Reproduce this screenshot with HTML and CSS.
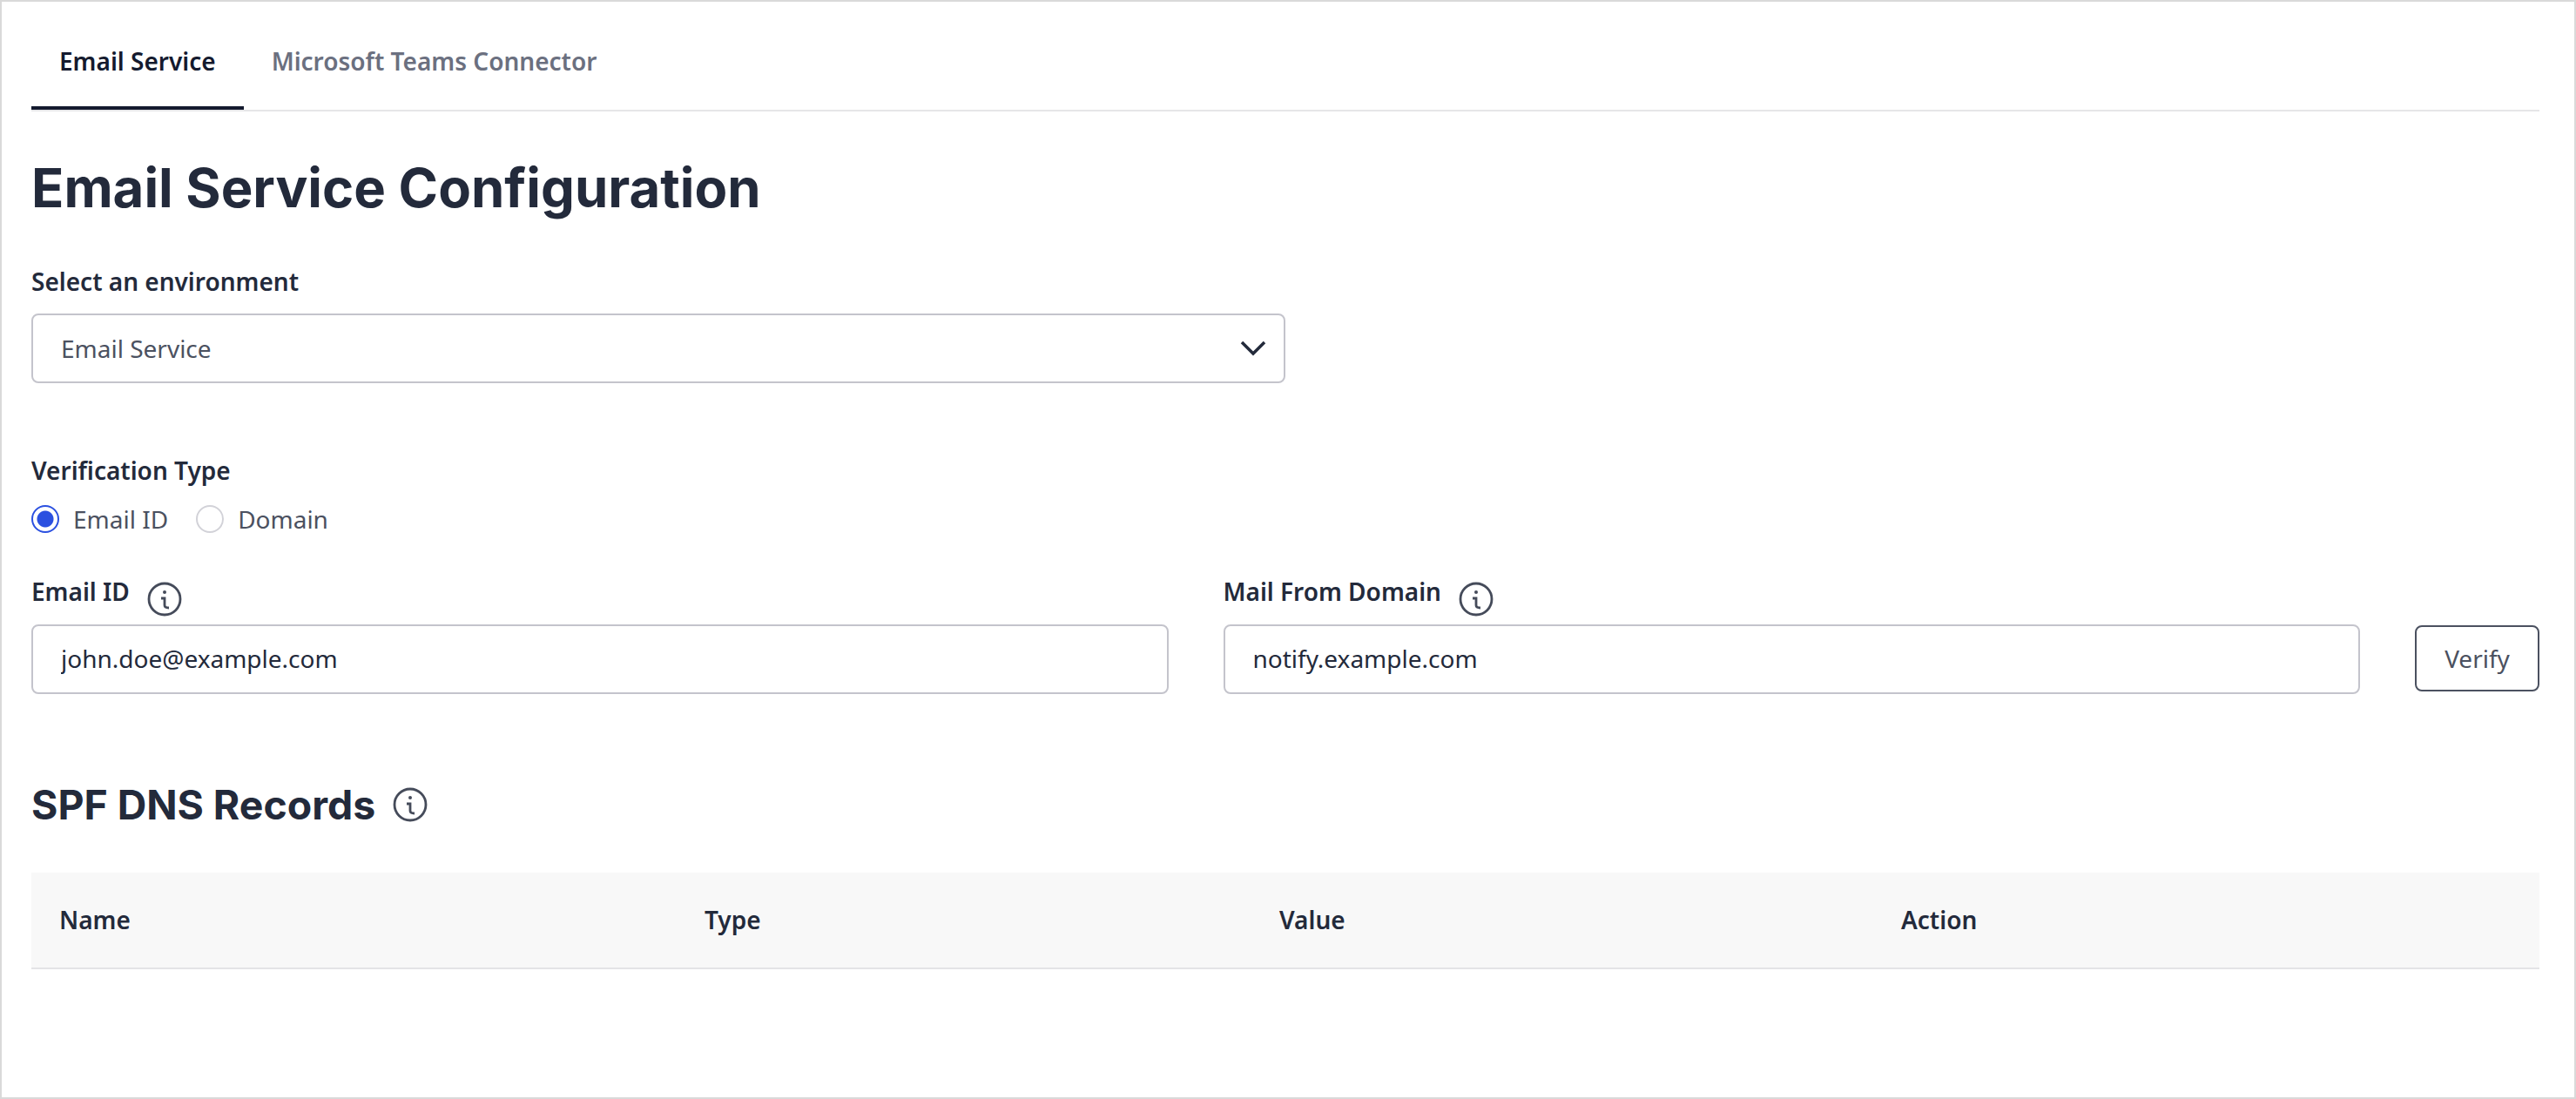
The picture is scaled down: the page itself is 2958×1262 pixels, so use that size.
FILE: index.html
```html
<!DOCTYPE html>
<html lang="en">
<head>
  <meta charset="UTF-8" />
  <title>Email Service Configuration</title>
  <link rel="stylesheet" href="styles.css">
</head>
<body>
<div class="page">
  <nav class="tabs">
    <a class="tab active">Email Service</a>
    <a class="tab">Microsoft Teams Connector</a>
  </nav>

  <h1 class="title">Email Service Configuration</h1>

  <label class="label env-label">Select an environment</label>
  <div class="select">
    <span>Email Service</span>
    <svg class="chevron" viewBox="0 0 30 18" width="30" height="18"><path d="M2 2 L15 15 L28 2" /></svg>
  </div>

  <div class="label type-label">Verification Type</div>
  <div class="radios">
    <label class="radio"><span class="dot checked"></span>Email ID</label>
    <label class="radio"><span class="dot"></span>Domain</label>
  </div>

  <div class="fields">
    <div class="field">
      <div class="field-head">
        <span class="label">Email ID</span>
        <svg class="info" viewBox="0 0 40 40" width="40" height="40"><circle cx="20" cy="20" r="18" /><circle class="info-dot" cx="20" cy="12" r="2" /><path d="M16 19 H20 V27 Q20 30 25 30" /></svg>
      </div>
      <input class="input" type="text" value="john.doe@example.com">
    </div>
    <div class="field">
      <div class="field-head">
        <span class="label">Mail From Domain</span>
        <svg class="info" viewBox="0 0 40 40" width="40" height="40"><circle cx="20" cy="20" r="18" /><circle class="info-dot" cx="20" cy="12" r="2" /><path d="M16 19 H20 V27 Q20 30 25 30" /></svg>
      </div>
      <input class="input" type="text" value="notify.example.com">
    </div>
    <button class="verify">Verify</button>
  </div>

  <div class="section-head">
    <h2 class="section-title">SPF DNS Records</h2>
    <svg class="info section-info" viewBox="0 0 40 40" width="40" height="40"><circle cx="20" cy="20" r="18" /><circle class="info-dot" cx="20" cy="12" r="2" /><path d="M16 19 H20 V27 Q20 30 25 30" /></svg>
  </div>

  <div class="table-head">
    <span>Name</span>
    <span>Type</span>
    <span>Value</span>
    <span>Action</span>
  </div>
</div>
</body>
</html>
```

FILE: styles.css
```css
html, body { margin: 0; padding: 0; background: #fff; }
body { font-family: "Noto Sans", sans-serif; color: #232a3b; }
.page { box-sizing: border-box; width: 2958px; height: 1262px; padding: 0 40px 0 34px; border: 2px solid #d9d9d9; overflow: hidden; }

.tabs { display: flex; height: 124px; border-bottom: 2px solid #e6e6e8; }
.tab { box-sizing: border-box; height: 124px; padding: 0 32px; line-height: 136px; font-size: 28px; font-weight: 600; color: #6b7080; }
.tab.active { color: #141a2e; border-bottom: 4px solid #141a2e; }

.title { margin: 48px 0 0; font-family: Inter, sans-serif; font-size: 61.6px; line-height: 80px; font-weight: 700; color: #232a3b; }

.label { font-size: 28px; font-weight: 600; line-height: 40px; color: #232a3b; }
.env-label { display: block; margin-top: 47px; }

.select { box-sizing: border-box; display: flex; align-items: center; justify-content: space-between; width: 1440px; height: 80px; margin-top: 17px; padding: 0 20px 1px 32px; border: 2px solid #c4c4cc; border-radius: 8px; font-size: 28px; color: #4b5160; }
.chevron { fill: none; stroke: #232a3b; stroke-width: 3.5; }

.type-label { margin-top: 80px; }
.radios { display: flex; gap: 32px; margin-top: 16px; }
.radio { display: flex; align-items: center; gap: 16px; height: 40px; font-size: 28px; color: #4b5160; }
.dot { box-sizing: border-box; width: 32px; height: 32px; border: 2px solid #d2d2d8; border-radius: 50%; }
.dot.checked { border-color: #2b50e0; background: radial-gradient(circle, #2b50e0 0 9px, #fff 10px); }

.fields { display: flex; align-items: flex-end; gap: 63px; margin-top: 41px; }
.field { flex: 1; }
.field-head { display: flex; gap: 20px; height: 60px; padding-top: 2px; box-sizing: border-box; }
.input { box-sizing: border-box; display: block; width: 100%; height: 80px; padding: 0 32px 2px; border: 2px solid #c4c4cc; border-radius: 8px; font-family: "Noto Sans", sans-serif; font-size: 28px; color: #232a3b; }
.info { flex: none; fill: none; stroke: #454b5a; stroke-width: 2.8; margin-top: 9px; }
.section-info { margin-top: 0; }
.info-dot { fill: #454b5a; stroke: none; }
.verify { box-sizing: border-box; width: 143px; height: 76px; margin-bottom: 3px; padding-bottom: 2px; background: #fff; border: 2px solid #4b5160; border-radius: 8px; font-family: "Noto Sans", sans-serif; font-size: 28px; color: #4b5160; }

.section-head { display: flex; align-items: center; gap: 20px; margin-top: 91px; }
.section-title { margin: 0; font-family: Inter, sans-serif; font-size: 46.4px; line-height: 72px; font-weight: 700; color: #232a3b; }

.table-head { box-sizing: border-box; display: grid; grid-template-columns: 741px 660px 714px 1fr; align-items: center; height: 111px; margin-top: 42px; padding-left: 32px; padding-bottom: 2px; background: #f8f8f8; border-bottom: 2px solid #e4e4e6; font-size: 28px; font-weight: 600; color: #232a3b; }
```
